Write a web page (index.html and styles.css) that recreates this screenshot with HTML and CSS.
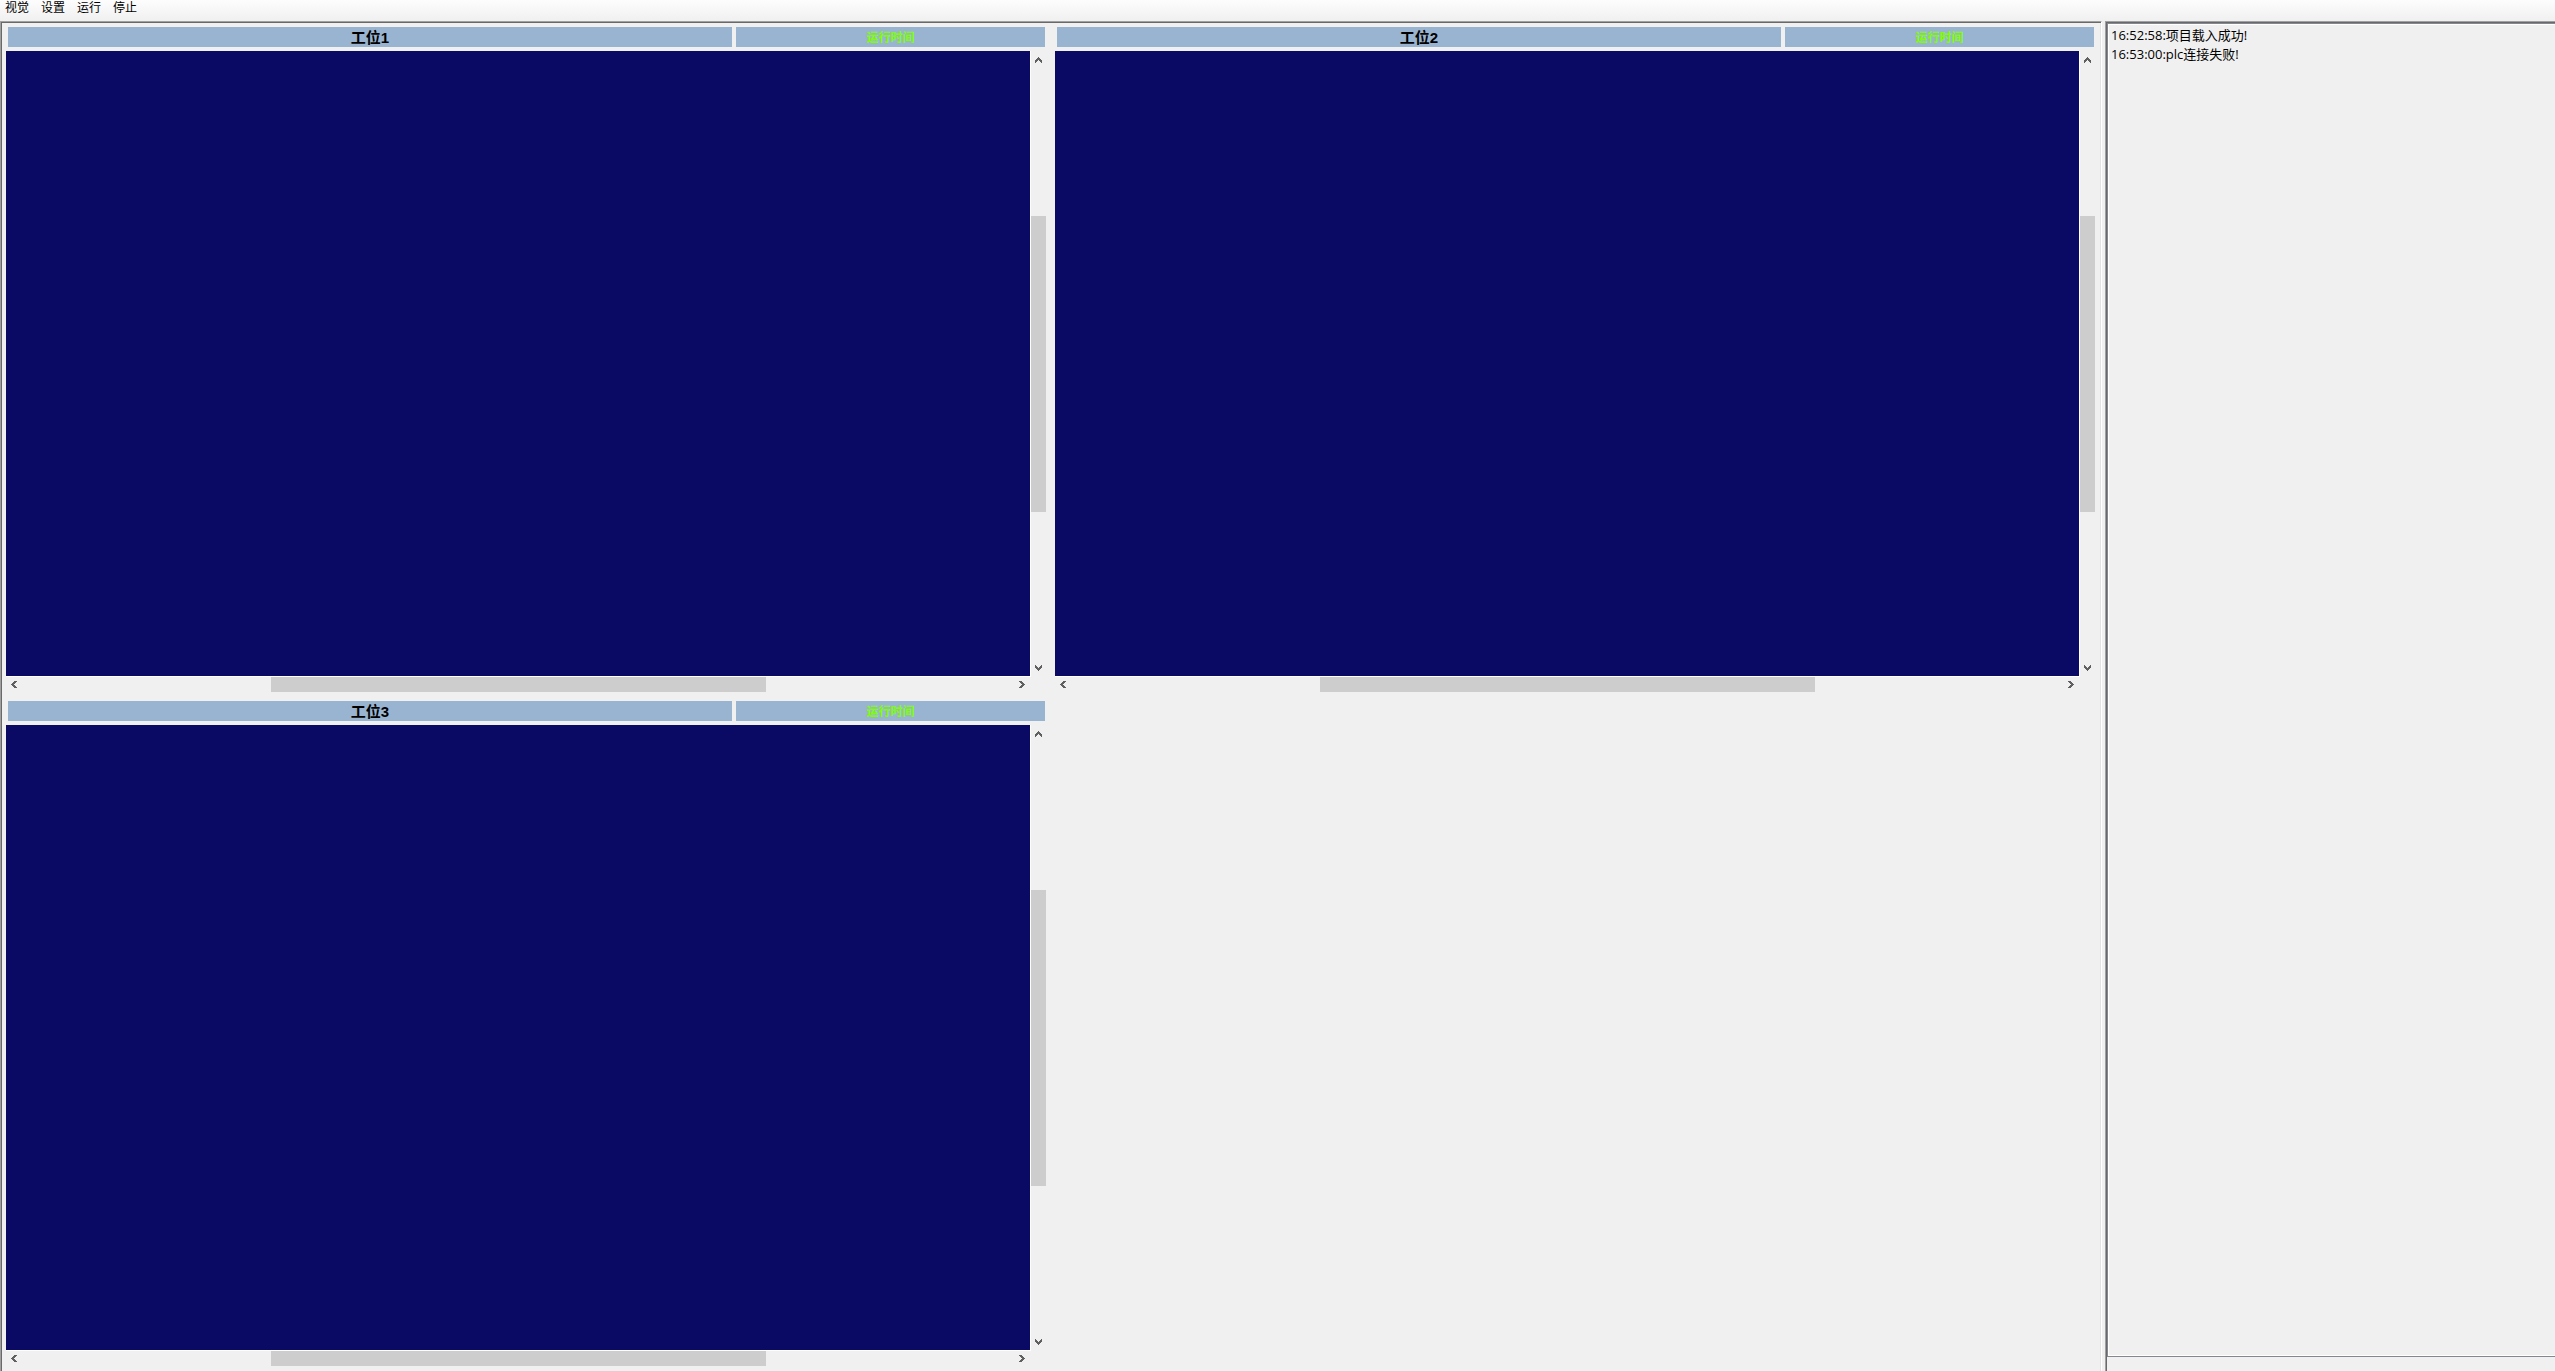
FILE: index.html
```html
<!DOCTYPE html>
<html lang="zh-CN">
<head>
<meta charset="utf-8">
<title>视觉</title>
<link rel="stylesheet" href="styles.css">
</head>
<body>
<nav class="menu">
  <button class="menu-item" type="button">视觉</button>
  <button class="menu-item" type="button">设置</button>
  <button class="menu-item" type="button">运行</button>
  <button class="menu-item" type="button">停止</button>
</nav>
<main class="workspace">
  <div class="stations">
    <section class="station">
      <header class="station-head"><h2 class="station-name">工位1</h2><p class="station-time">运行时间</p></header>
      <div class="viewer">
        <div class="canvas"></div>
        <div class="bar bar-v">
          <button class="arrow" type="button" aria-label="向上"><svg viewBox="0 0 7 6"><path d="M3 0h1v1h1v1h1v1h1v3h-1v-1h-1v-1h-1v-1h-1v1h-1v1h-1v1h-1v-3h1v-1h1v-1h1z"/></svg></button>
          <div class="thumb"></div>
          <button class="arrow" type="button" aria-label="向下"><svg class="down" viewBox="0 0 7 6"><path d="M3 0h1v1h1v1h1v1h1v3h-1v-1h-1v-1h-1v-1h-1v1h-1v1h-1v1h-1v-3h1v-1h1v-1h1z"/></svg></button>
        </div>
        <div class="bar bar-h">
          <button class="arrow" type="button" aria-label="向左"><svg class="left" viewBox="0 0 6 7"><path d="M0 3v1h1v1h1v1h1v1h3v-1h-1v-1h-1v-1h-1v-1h1v-1h1v-1h1v-1h-3v1h-1v1h-1v1z"/></svg></button>
          <div class="thumb"></div>
          <button class="arrow" type="button" aria-label="向右"><svg class="right" viewBox="0 0 6 7"><path d="M0 3v1h1v1h1v1h1v1h3v-1h-1v-1h-1v-1h-1v-1h1v-1h1v-1h1v-1h-3v1h-1v1h-1v1z"/></svg></button>
        </div>
      </div>
    </section>
    <section class="station">
      <header class="station-head"><h2 class="station-name">工位2</h2><p class="station-time">运行时间</p></header>
      <div class="viewer">
        <div class="canvas"></div>
        <div class="bar bar-v">
          <button class="arrow" type="button" aria-label="向上"><svg viewBox="0 0 7 6"><path d="M3 0h1v1h1v1h1v1h1v3h-1v-1h-1v-1h-1v-1h-1v1h-1v1h-1v1h-1v-3h1v-1h1v-1h1z"/></svg></button>
          <div class="thumb"></div>
          <button class="arrow" type="button" aria-label="向下"><svg class="down" viewBox="0 0 7 6"><path d="M3 0h1v1h1v1h1v1h1v3h-1v-1h-1v-1h-1v-1h-1v1h-1v1h-1v1h-1v-3h1v-1h1v-1h1z"/></svg></button>
        </div>
        <div class="bar bar-h">
          <button class="arrow" type="button" aria-label="向左"><svg class="left" viewBox="0 0 6 7"><path d="M0 3v1h1v1h1v1h1v1h3v-1h-1v-1h-1v-1h-1v-1h1v-1h1v-1h1v-1h-3v1h-1v1h-1v1z"/></svg></button>
          <div class="thumb"></div>
          <button class="arrow" type="button" aria-label="向右"><svg class="right" viewBox="0 0 6 7"><path d="M0 3v1h1v1h1v1h1v1h3v-1h-1v-1h-1v-1h-1v-1h1v-1h1v-1h1v-1h-3v1h-1v1h-1v1z"/></svg></button>
        </div>
      </div>
    </section>
    <section class="station">
      <header class="station-head"><h2 class="station-name">工位3</h2><p class="station-time">运行时间</p></header>
      <div class="viewer">
        <div class="canvas"></div>
        <div class="bar bar-v">
          <button class="arrow" type="button" aria-label="向上"><svg viewBox="0 0 7 6"><path d="M3 0h1v1h1v1h1v1h1v3h-1v-1h-1v-1h-1v-1h-1v1h-1v1h-1v1h-1v-3h1v-1h1v-1h1z"/></svg></button>
          <div class="thumb"></div>
          <button class="arrow" type="button" aria-label="向下"><svg class="down" viewBox="0 0 7 6"><path d="M3 0h1v1h1v1h1v1h1v3h-1v-1h-1v-1h-1v-1h-1v1h-1v1h-1v1h-1v-3h1v-1h1v-1h1z"/></svg></button>
        </div>
        <div class="bar bar-h">
          <button class="arrow" type="button" aria-label="向左"><svg class="left" viewBox="0 0 6 7"><path d="M0 3v1h1v1h1v1h1v1h3v-1h-1v-1h-1v-1h-1v-1h1v-1h1v-1h1v-1h-3v1h-1v1h-1v1z"/></svg></button>
          <div class="thumb"></div>
          <button class="arrow" type="button" aria-label="向右"><svg class="right" viewBox="0 0 6 7"><path d="M0 3v1h1v1h1v1h1v1h3v-1h-1v-1h-1v-1h-1v-1h1v-1h1v-1h1v-1h-3v1h-1v1h-1v1z"/></svg></button>
        </div>
      </div>
    </section>
  </div>
  <aside class="log">
    <ul class="log-list">
      <li>16:52:58:项目载入成功!</li>
      <li>16:53:00:plc连接失败!</li>
    </ul>
  </aside>
</main>
</body>
</html>
```
FILE: styles.css
```css
* { box-sizing: border-box; margin: 0; padding: 0; }

body {
  display: flex;
  flex-direction: column;
  height: 100vh;
  overflow: hidden;
  background: #f0f0f0;
  color: #000;
  font-family: "Open Sans", "Noto Sans CJK SC", sans-serif;
  font-size: 12px;
}

button {
  border: 0;
  background: transparent;
  color: inherit;
  font: inherit;
}

.menu {
  display: flex;
  flex: none;
  gap: 12px;
  height: 21px;
  padding-left: 5px;
  background: linear-gradient(#fdfdfd, #f0f0f0);
}

.menu-item { height: 16px; line-height: 16px; }

.workspace {
  display: grid;
  grid-template-columns: minmax(0, 1fr) 450px;
  gap: 3px;
  flex: 1;
  min-height: 0;
}

.stations {
  display: grid;
  grid-template-columns: 1fr 1fr;
  grid-template-rows: 1fr 1fr;
  min-height: 0;
  border: 1px solid #a0a0a0;
  border-right-color: #fff;
  border-bottom: 0;
  box-shadow: inset 1px 1px #696969, inset -1px 0 #e3e3e3;
  padding: 1px 1px 0;
}

.station {
  display: flex;
  flex-direction: column;
  gap: 4px;
  min-height: 0;
  padding: 4px 5px 5px 4px;
}

.station-head {
  display: grid;
  grid-template-columns: calc(70% - 2px) 1fr;
  gap: 4px;
  height: 20px;
  margin: 0 1px 0 2px;
  line-height: 22px;
  text-align: center;
}

.station-name,
.station-time { height: 20px; background: #99b4d1; }

.station-name {
  font-family: "Liberation Sans", "Noto Sans CJK SC", sans-serif;
  font-size: 15px;
  font-weight: 700;
}

.station-time { color: #7fff00; font-weight: 700; }

.viewer {
  display: grid;
  grid-template-columns: 1fr 15px;
  grid-template-rows: 1fr 15px;
  flex: 1;
  min-height: 0;
}

.canvas {
  border: 1px solid #fff;
  border-width: 0 1px 1px 0;
  background: #0a0a64;
  background-clip: padding-box;
}

.bar { display: flex; justify-content: space-between; align-items: center; }
.bar-v { flex-direction: column; padding-bottom: 1px; }
.bar-h { padding-right: 1px; }
.arrow { display: flex; align-items: center; justify-content: center; width: 16px; height: 17px; }
.bar-v .arrow { width: 15px; }
.bar-v .thumb { width: 15px; height: 296px; background: #cdcdcd; }
.bar-h .thumb { width: 495px; height: 15px; background: #cdcdcd; }
.arrow svg { width: 7px; height: 6px; fill: #606060; shape-rendering: crispEdges; }
.arrow .left, .arrow .right { width: 6px; height: 7px; }
.arrow .down, .arrow .right { transform: rotate(180deg); }

.log {
  border: 1px solid #a0a0a0;
  border-width: 1px 0 0 1px;
  box-shadow: inset 1px 1px #696969;
  padding: 1px 0 14px 1px;
}

.log-list {
  height: 100%;
  border: 1px solid #828790;
  border-right: 0;
  box-shadow: inset 1px 1px #fff, inset 0 -1px #fff;
  padding: 2px 3px;
  list-style: none;
  font-size: 13px;
  line-height: 19px;
}
```
